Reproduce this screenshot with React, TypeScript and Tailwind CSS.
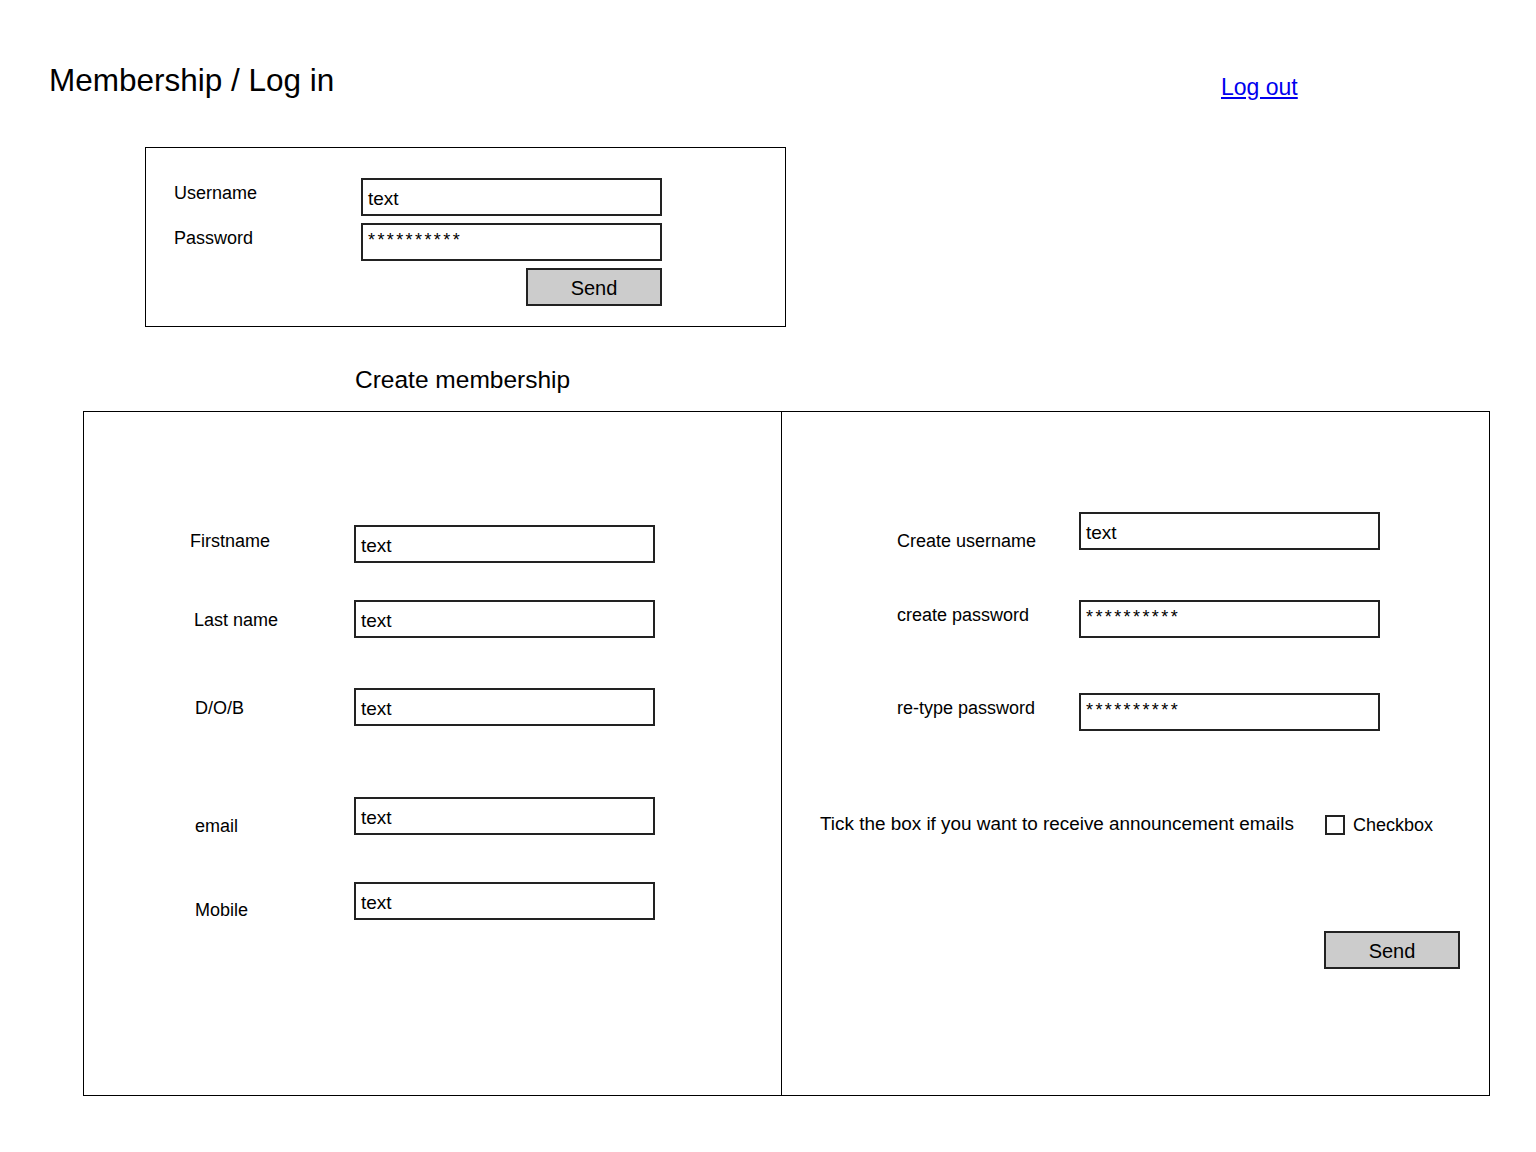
import React from "react";

const font = "font-['Liberation_Sans',Arial,sans-serif]";

function Field({ value, pw }: { value: string; pw?: boolean }) {
  return (
    <div className="w-[301px] h-[38px] border-2 border-[#222] bg-white px-[5px] flex items-start">
      <span className={pw ? "text-[18px] tracking-[2.4px] mt-[2px]" : "text-[19px] mt-[5px]"}>{value}</span>
    </div>
  );
}

function Row({ label, value, pw, labelW, nudge, mt }: { label: string; value: string; pw?: boolean; labelW: string; nudge: string; mt: string }) {
  return (
    <div className={`flex items-start ${mt}`}>
      <div className={`${labelW} text-[18px] leading-none ${nudge}`}>{label}</div>
      <Field value={value} pw={pw} />
    </div>
  );
}

export default function App() {
  return (
    <div className={`w-[1536px] h-[1152px] bg-white text-black ${font}`}>
      {/* header */}
      <div className="flex items-start pt-[65px] pl-[49px]">
        <h1 className="w-[1172px] text-[31.5px] leading-none">Membership / Log in</h1>
        <a href="#" className="text-[23px] leading-none text-[#0000ee] underline mt-[11px]">Log out</a>
      </div>

      {/* login box */}
      <div className="ml-[145px] mt-[48px] w-[641px] h-[180px] border border-black pt-[30px] pl-[28px]">
        <div className="flex items-start">
          <div className="w-[187px] text-[18px] leading-none mt-[6px]">Username</div>
          <Field value="text" />
        </div>
        <div className="flex items-start mt-[7px]">
          <div className="w-[187px] text-[18px] leading-none mt-[6px]">Password</div>
          <Field value="**********" pw />
        </div>
        <div className="flex mt-[7px] pl-[352px]">
          <button className="w-[136px] h-[38px] border-2 border-[#222] bg-[#cccccc] text-[20px] leading-none pt-[2px]">Send</button>
        </div>
      </div>

      <h2 className="ml-[355px] mt-[41px] text-[24.5px] leading-none">Create membership</h2>

      {/* create membership box */}
      <div className="ml-[83px] mt-[18px] w-[1407px] h-[685px] border border-black flex">
        <div className="w-[698px] h-full border-r border-black pl-[106px]">
          <Row label="Firstname" value="text" labelW="w-[164px]" nudge="mt-[7px]" mt="mt-[113px]" />
          <Row label="Last name" value="text" labelW="w-[164px] pl-[4px]" nudge="mt-[11px]" mt="mt-[37px]" />
          <Row label="D/O/B" value="text" labelW="w-[164px] pl-[5px]" nudge="mt-[11px]" mt="mt-[50px]" />
          <Row label="email" value="text" labelW="w-[164px] pl-[5px]" nudge="mt-[20px]" mt="mt-[71px]" />
          <Row label="Mobile" value="text" labelW="w-[164px] pl-[5px]" nudge="mt-[19px]" mt="mt-[47px]" />
        </div>
        <div className="flex-1 h-full">
          <div className="pl-[115px]">
            <Row label="Create username" value="text" labelW="w-[182px]" nudge="mt-[20px]" mt="mt-[100px]" />
            <Row label="create password" value="**********" pw labelW="w-[182px]" nudge="mt-[6px]" mt="mt-[50px]" />
            <Row label="re-type password" value="**********" pw labelW="w-[182px]" nudge="mt-[6px]" mt="mt-[55px]" />
          </div>
          <div className="flex items-center mt-[84px] pl-[38px]">
            <span className="w-[505px] text-[18.9px] leading-none">Tick the box if you want to receive announcement emails</span>
            <span className="w-[20px] h-[20px] border-2 border-[#222] bg-white"></span>
            <span className="ml-[8px] text-[18px] leading-none">Checkbox</span>
          </div>
          <div className="flex mt-[96px] pl-[542px]">
            <button className="w-[136px] h-[38px] border-2 border-[#222] bg-[#cccccc] text-[20px] leading-none pt-[2px]">Send</button>
          </div>
        </div>
      </div>
    </div>
  );
}
